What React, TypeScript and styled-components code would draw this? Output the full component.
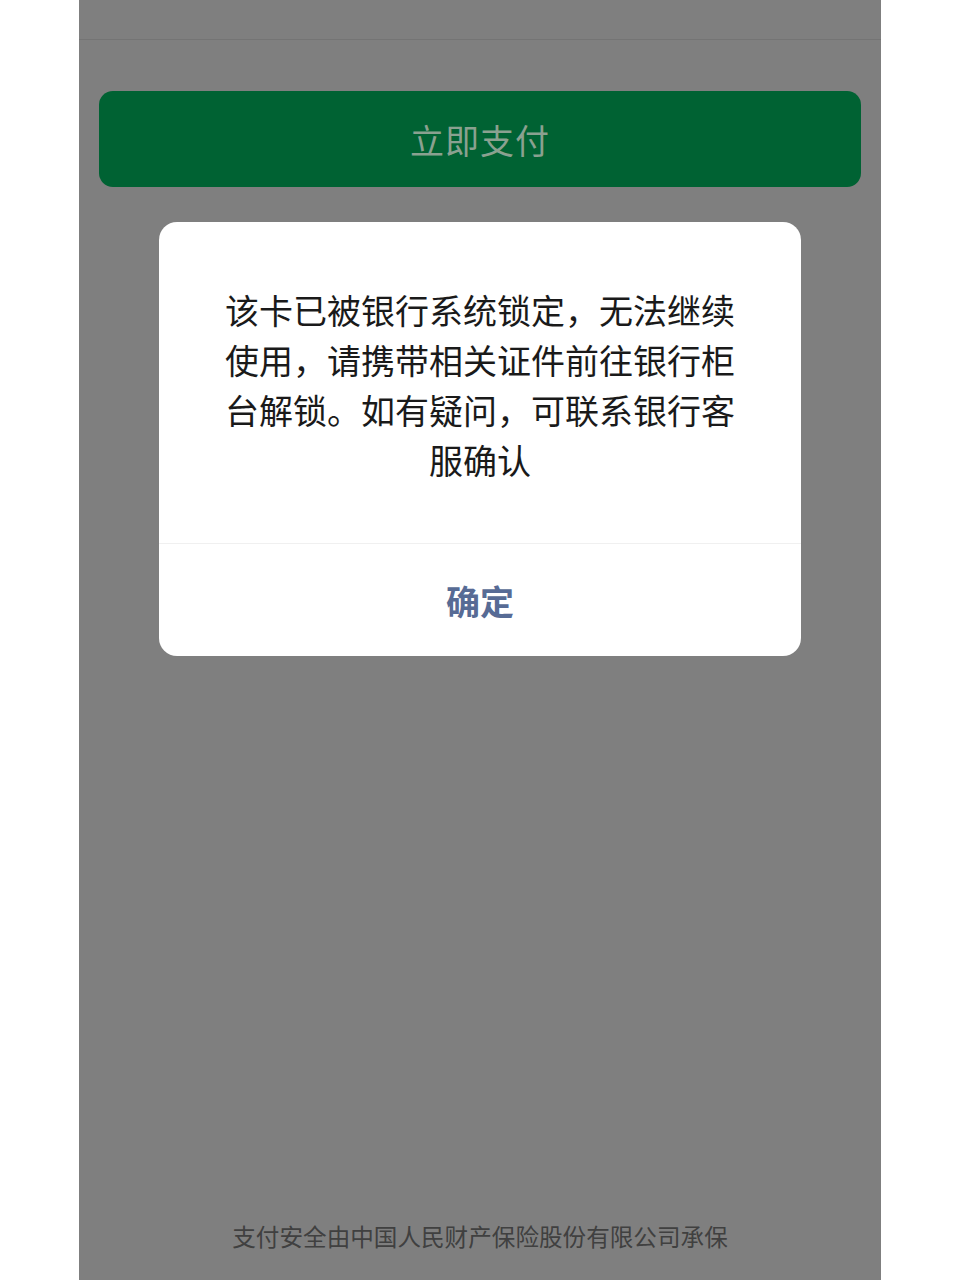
import styled, { createGlobalStyle } from "styled-components";

const GlobalStyle = createGlobalStyle`
  html, body {
    margin: 0;
    padding: 0;
    background: #ffffff;
  }
  body {
    font-family: "Noto Sans CJK SC", "Noto Sans", sans-serif;
  }
`;

const Screen = styled.div`
  width: 802px;
  height: 1280px;
  margin: 0 auto;
  background: #7f7f7f;
  display: flex;
  flex-direction: column;
  overflow: hidden;
`;

const TopBar = styled.div`
  height: 39px;
  border-bottom: 1px solid #747474;
  flex-shrink: 0;
`;

const PayButton = styled.div`
  margin: 51px 20px 0;
  height: 96px;
  border-radius: 14px;
  background: #006233;
  color: #8aa190;
  font-size: 34px;
  display: flex;
  align-items: center;
  justify-content: center;
  letter-spacing: 1px;
`;

const Dialog = styled.div`
  margin: 35px 80px 0;
  background: #ffffff;
  border-radius: 18px;
  overflow: hidden;
`;

const DialogBody = styled.div`
  padding: 63px 62px 58px;
  font-size: 34px;
  line-height: 50px;
  color: #1a1a1a;
  text-align: center;
`;

const DialogAction = styled.div`
  height: 112px;
  border-top: 1px solid #f0f0f0;
  display: flex;
  align-items: center;
  justify-content: center;
  font-size: 34px;
  font-weight: 700;
  color: #576b95;
`;

const Footer = styled.div`
  margin-top: auto;
  padding-bottom: 28px;
  text-align: center;
  font-size: 23.6px;
  line-height: 32px;
  color: #404040;
`;

export default function App() {
  return (
    <>
      <GlobalStyle />
      <Screen>
        <TopBar />
        <PayButton>立即支付</PayButton>
        <Dialog>
          <DialogBody>
            该卡已被银行系统锁定，无法继续使用，请携带相关证件前往银行柜台解锁。如有疑问，可联系银行客服确认
          </DialogBody>
          <DialogAction>确定</DialogAction>
        </Dialog>
        <Footer>支付安全由中国人民财产保险股份有限公司承保</Footer>
      </Screen>
    </>
  );
}
